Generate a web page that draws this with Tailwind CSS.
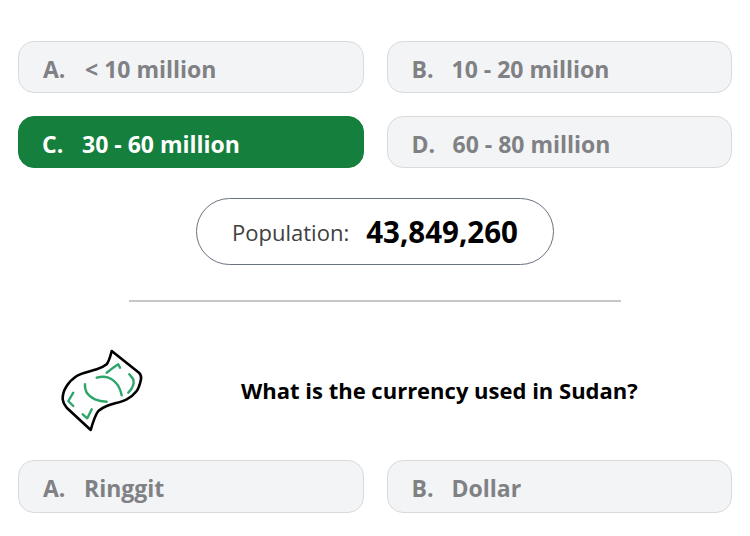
<!DOCTYPE html>
<html lang="en">
<head>
  <meta charset="UTF-8" />
  <title>Sudan Quiz</title>
  <script src="https://cdn.jsdelivr.net/npm/@tailwindcss/browser@4"></script>
</head>
<body class="bg-white h-[536px] overflow-hidden font-['Open_Sans','Noto_Sans',sans-serif]">

  <div class="px-[18px] pt-[41px]">
    <div class="grid grid-cols-2 gap-x-[23px] gap-y-[23px]">
      <div class="h-[52px] flex items-center pt-[5px] px-6 rounded-2xl border border-[#d9dadc] bg-gray-100 text-[#808184] text-[23px] font-bold">
        <span class="w-[42px]">A.</span><span>&lt; 10 million</span>
      </div>
      <div class="h-[52px] flex items-center pt-[5px] px-6 rounded-2xl border border-[#d9dadc] bg-gray-100 text-[#808184] text-[23px] font-bold">
        <span class="w-[40px]">B.</span><span>10 - 20 million</span>
      </div>
      <div class="h-[52px] flex items-center pt-[5px] px-[23px] rounded-2xl border border-[#15803d] bg-[#15803d] text-white text-[23px] font-bold">
        <span class="w-[40px]">C.</span><span>30 - 60 million</span>
      </div>
      <div class="h-[52px] flex items-center pt-[5px] px-6 rounded-2xl border border-[#d9dadc] bg-gray-100 text-[#808184] text-[23px] font-bold">
        <span class="w-[41px]">D.</span><span>60 - 80 million</span>
      </div>
    </div>

    <div class="flex justify-center mt-[30px]">
      <div class="w-[358px] h-[67px] flex items-center justify-center gap-[17px] pt-[2px] rounded-full border border-[#6b7280]">
        <span class="text-[22px] text-[#404040]">Population:</span>
        <span class="text-[29.5px] font-bold text-black">43,849,260</span>
      </div>
    </div>

    <div class="mx-auto mt-[35px] w-[492px] h-[2px] bg-[#c8c8c8]"></div>

    <div class="flex items-center h-[98px] mt-[39px]">
      <svg class="w-[84px] h-[84px] ml-[42px] shrink-0" viewBox="0 0 84 84" fill="none" stroke-linecap="round" stroke-linejoin="round">
        <path d="M51.7 3 L79 24.7 C81 27 81.5 29 81 31.3 C80 36 79 40 76.7 43 C73.5 47 70.5 49.5 66.7 51.3 C60 54.5 53 55.5 46.7 58 C43 59.5 40.5 61 38.3 63 C35 67 33 74 30.7 82 L6.7 59.7 C4.5 57 3 54 2.7 51.3 C2.5 46 4 42 6.7 38 C9.5 33.5 13 30.5 16.7 28 C22.5 24.5 30 23.5 36.7 21.3 C40.5 20 44 18.5 46.7 16.3 C49 13 50.5 8 51.7 3 Z" stroke="#000" stroke-width="2.6" fill="#fff"/>
        <g stroke="#2ea56b" stroke-width="2.4">
          <path d="M46.7 24.7 C50 22 54 19 58.3 16.3 L60 19.7"/>
          <path d="M69.3 26.3 L73.3 31.3 C74.5 36 72 41 68.3 44.7"/>
          <path d="M36.7 29.7 C41 28.5 45 28.5 48.3 29.7 C53 31.5 56 34.5 58.3 38 C60 41 61 44 61.7 47.3"/>
          <path d="M25 36.3 C24.5 39.5 25.5 42 26.7 44.7 C28.5 47.5 31.5 49.8 35 51.3 C38.5 52.8 42.5 53.5 46.7 53.7"/>
          <path d="M13.3 44.7 L8.3 53 L13.3 58"/>
          <path d="M22.7 66.3 L27.3 70.3 L31.7 61.3"/>
        </g>
      </svg>
      <p class="ml-[97px] text-[22px] font-bold text-black">What is the currency used in Sudan?</p>
    </div>

    <div class="grid grid-cols-2 gap-x-[23px] gap-y-[23px] mt-[21px]">
      <div class="h-[53px] flex items-center pt-[3px] px-6 rounded-2xl border border-[#d9dadc] bg-gray-100 text-[#808184] text-[23px] font-bold">
        <span class="w-[41px]">A.</span><span>Ringgit</span>
      </div>
      <div class="h-[53px] flex items-center pt-[3px] px-6 rounded-2xl border border-[#d9dadc] bg-gray-100 text-[#808184] text-[23px] font-bold">
        <span class="w-[40px]">B.</span><span>Dollar</span>
      </div>
    </div>
  </div>

</body>
</html>
